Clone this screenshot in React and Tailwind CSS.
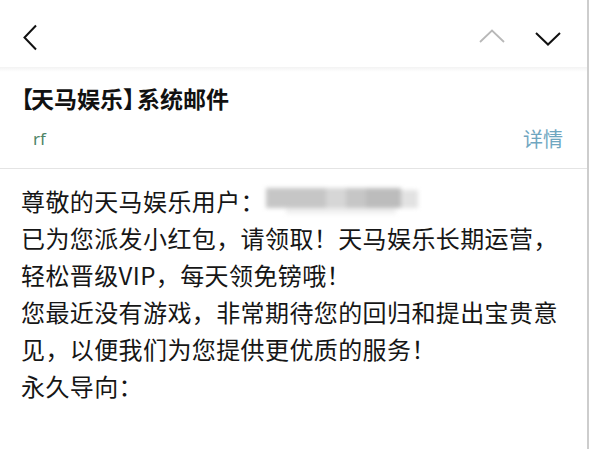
import React from "react";

const font = { fontFamily: '"Noto Sans CJK SC", "Noto Sans", sans-serif' };

export default function App() {
  const lines = [
    "已为您派发小红包，请领取！天马娱乐长期运营，",
    "轻松晋级VIP，每天领免镑哦！",
    "您最近没有游戏，非常期待您的回归和提出宝贵意",
    "见，以便我们为您提供更优质的服务！",
    "永久导向：",
  ];
  return (
    <div
      className="w-[589px] h-[449px] bg-white overflow-hidden border-r-2 border-[#cdcdcd] text-[#111]"
      style={font}
    >
      {/* header */}
      <div className="h-[67px] flex items-center pl-[22px] pr-[26px]">
        <svg width="16" height="27" viewBox="0 0 16 27" className="mt-[7px]">
          <path d="M14 1.5 L2.5 13.5 L14 25.5" fill="none" stroke="#111" strokeWidth="2" />
        </svg>
        <div className="flex-1" />
        <svg width="26" height="14" viewBox="0 0 26 14" className="mt-[4px]">
          <path d="M1 13 L13 1.5 L25 13" fill="none" stroke="#b8b8b8" strokeWidth="1.8" />
        </svg>
        <svg width="26" height="14" viewBox="0 0 26 14" className="ml-[30px] mt-[10px]">
          <path d="M1 1 L13 12.5 L25 1" fill="none" stroke="#111" strokeWidth="2" />
        </svg>
      </div>
      <div className="h-[5px] bg-gradient-to-b from-[#f3f3f3] to-white" />

      {/* title */}
      <div className="pl-[10px] pt-[11px] text-[23px] leading-[30px] font-bold whitespace-nowrap">
        <span className="tracking-[-2px]">【</span>天马娱乐<span className="tracking-[-11px]">】</span>
        <span className="ml-[2px]">系统邮件</span>
      </div>
      <div className="flex items-center justify-between pl-[33px] pr-[24px] mt-[14px] h-[24px]">
        <span className="text-[17px] leading-[20px] text-[#4f8466]" style={{ fontFamily: '"Noto Sans", sans-serif' }}>rf</span>
        <span className="text-[20px] leading-[24px] text-[#6fa6c0]">详情</span>
      </div>
      <div className="mt-[17px] h-px bg-[#e4e4e4]" />

      {/* body */}
      <div className="pl-[21px] pt-[13px] text-[24px] leading-[37px] tracking-[0.4px] whitespace-nowrap text-[#161616]">
        <div className="flex items-center">
          <span>尊敬的天马娱乐用户：</span>
          <span className="relative ml-[1px] h-[22px] w-[152px] -mt-[4px] blur-[2px]">
            <span className="absolute left-0 top-0 h-[20px] w-[135px] bg-[#c6c6c6]" />
            <span className="absolute left-[60px] top-0 h-[20px] w-[20px] bg-[#d6d6d6]" />
            <span className="absolute left-[100px] top-0 h-[20px] w-[35px] bg-[#bcbcbc]" />
            <span className="absolute left-[135px] top-[2px] h-[18px] w-[17px] bg-[#e2e2e2]" />
            <span className="absolute left-[20px] top-[20px] h-[6px] w-[110px] bg-[#f0f0f0]" />
          </span>
        </div>
        {lines.map((l) => (
          <div key={l}>{l}</div>
        ))}
      </div>
    </div>
  );
}
